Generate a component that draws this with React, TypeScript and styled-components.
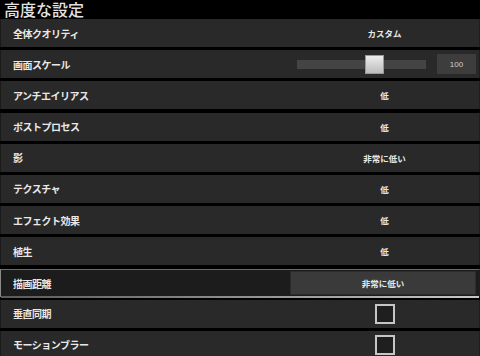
import styled, { createGlobalStyle } from "styled-components";

const GlobalStyle = createGlobalStyle`
  html, body {
    margin: 0;
    padding: 0;
    background: #000;
  }
  body {
    font-family: "Noto Sans CJK JP", "Noto Sans", sans-serif;
    overflow: hidden;
  }
`;

const Screen = styled.div`
  width: 480px;
  height: 356px;
  background: #000;
  overflow: hidden;
`;

const Title = styled.h1`
  margin: 0;
  height: 19px;
  padding-left: 4px;
  font-size: 16px;
  line-height: 19px;
  font-weight: 500;
  color: #e2e2e2;
`;

const List = styled.div`
  display: flex;
  flex-direction: column;
  gap: 3.2px;
`;

const Row = styled.div<{ $selected?: boolean }>`
  position: relative;
  flex: 0 0 28px;
  box-sizing: border-box;
  display: grid;
  grid-template-columns: 289px 1fr;
  align-items: center;
  background: ${(p) => (p.$selected ? "#1c1c1c" : "#292929")};
  border-left: 1px solid ${(p) => (p.$selected ? "#8a8a8a" : "#1a1a1a")};
  border-top: ${(p) => (p.$selected ? "1px solid #6a6a6a" : "none")};
  border-right: 1px solid #1e1e1e;
  ${(p) =>
    p.$selected &&
    `
    &::after {
      content: "";
      position: absolute;
      left: 0;
      right: 0;
      bottom: -1px;
      height: 2px;
      background: linear-gradient(to right, #5a5a5a, #9a9a9a 60%, #c8c8c8);
    }
  `}
`;

const Label = styled.span`
  padding-left: 12px;
  font-size: 10px;
  letter-spacing: -0.5px;
  font-weight: 700;
  color: #e8e8e8;
`;

const Value = styled.div<{ $boxed?: boolean }>`
  height: ${(p) => (p.$boxed ? "24px" : "auto")};
  margin-right: ${(p) => (p.$boxed ? "3px" : "0")};
  display: flex;
  align-items: center;
  justify-content: center;
  box-sizing: border-box;
  background: ${(p) => (p.$boxed ? "#3a3a3a" : "transparent")};
  border: ${(p) => (p.$boxed ? "1px solid #2c2c2c" : "none")};
  font-size: 8.5px;
  font-weight: 700;
  color: #e8e8e8;
`;

const SliderCell = styled.div`
  grid-column: 1 / -1;
  display: flex;
  align-items: center;
  justify-content: flex-end;
  padding-right: 3px;
`;

const Track = styled.div`
  position: relative;
  width: 129px;
  height: 9px;
  background: #444;
  margin-right: 11px;
`;

const Thumb = styled.div`
  position: absolute;
  top: -5px;
  width: 19px;
  height: 19px;
  box-sizing: border-box;
  border: 1px solid #999;
  background: linear-gradient(#ececec, #bcbcbc);
`;

const NumberBox = styled.div`
  width: 39px;
  height: 20px;
  background: #3d3d3d;
  display: flex;
  align-items: center;
  justify-content: center;
  font-family: "Liberation Sans", sans-serif;
  font-size: 8px;
  color: #cfcfcf;
`;

const Check = styled.div`
  width: 20px;
  height: 20px;
  box-sizing: border-box;
  border: 2px solid #c6c6c6;
  background: #1f1f1f;
`;

type Item =
  | { label: string; kind: "value"; value: string; selected?: boolean }
  | { label: string; kind: "slider"; value: number; min: number; max: number }
  | { label: string; kind: "check" };

const items: Item[] = [
  { label: "全体クオリティ", kind: "value", value: "カスタム" },
  { label: "画面スケール", kind: "slider", value: 100, min: 25, max: 150 },
  { label: "アンチエイリアス", kind: "value", value: "低" },
  { label: "ポストプロセス", kind: "value", value: "低" },
  { label: "影", kind: "value", value: "非常に低い" },
  { label: "テクスチャ", kind: "value", value: "低" },
  { label: "エフェクト効果", kind: "value", value: "低" },
  { label: "植生", kind: "value", value: "低" },
  { label: "描画距離", kind: "value", value: "非常に低い", selected: true },
  { label: "垂直同期", kind: "check" },
  { label: "モーションブラー", kind: "check" },
];

export default function App() {
  return (
    <Screen>
      <GlobalStyle />
      <Title>高度な設定</Title>
      <List>
        {items.map((item) => (
          <Row key={item.label} $selected={item.kind === "value" && item.selected}>
            <Label style={item.kind === "slider" ? { gridColumn: 1, gridRow: 1 } : undefined}>
              {item.label}
            </Label>
            {item.kind === "value" && <Value $boxed={item.selected}>{item.value}</Value>}
            {item.kind === "check" && (
              <Value>
                <Check />
              </Value>
            )}
            {item.kind === "slider" && (
              <SliderCell style={{ gridRow: 1 }}>
                <Track>
                  <Thumb
                    style={{
                      left: `${((item.value - item.min) / (item.max - item.min)) * 129 - 9.5}px`,
                    }}
                  />
                </Track>
                <NumberBox>{item.value}</NumberBox>
              </SliderCell>
            )}
          </Row>
        ))}
      </List>
    </Screen>
  );
}
